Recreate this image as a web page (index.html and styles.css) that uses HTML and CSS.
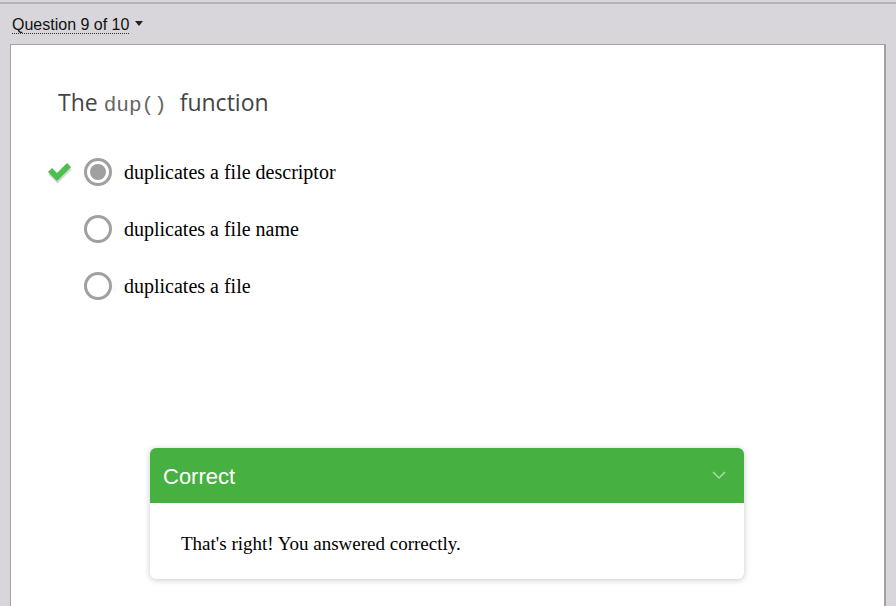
FILE: index.html
```html
<!DOCTYPE html>
<html>
<head>
<meta charset="utf-8">
<link rel="stylesheet" href="styles.css">
</head>
<body>
<div class="quiz">
  <div class="quiz-head">
    <span class="qnum">Question 9 of 10</span><span class="caret"></span>
  </div>
  <div class="panel">
    <h2 class="qtitle">The <code class="code">dup()</code> function</h2>
    <ul class="options">
      <li class="option">
        <span class="mark">
          <svg width="26" height="24" viewBox="0 0 26 24">
            <path d="M1.5 13.5 L5.5 9.5 L10.5 14.5 L20.5 4.5 L24.5 8.5 L10.5 22.5 Z" fill="#d4d4d4"/>
            <path d="M1 11 L5 7 L10 12 L20 2 L24 6 L10 20 Z" fill="#4cc04c"/>
          </svg>
        </span>
        <span class="radio checked"></span>
        <span class="label">duplicates a file descriptor</span>
      </li>
      <li class="option">
        <span class="mark"></span>
        <span class="radio"></span>
        <span class="label">duplicates a file name</span>
      </li>
      <li class="option">
        <span class="mark"></span>
        <span class="radio"></span>
        <span class="label">duplicates a file</span>
      </li>
    </ul>
    <div class="feedback">
      <div class="fb-head">
        <span class="fb-title">Correct</span>
        <svg class="chev" width="14" height="9" viewBox="0 0 14 9"><path d="M1 1 L7 7 L13 1" fill="none" stroke="rgba(255,255,255,0.55)" stroke-width="1.5"/></svg>
      </div>
      <div class="fb-body">That's right! You answered correctly.</div>
    </div>
  </div>
</div>
</body>
</html>
```
FILE: styles.css
```css
html, body {
  margin: 0;
  padding: 0;
  background: #d8d6db;
  overflow: hidden;
}
.quiz {
  margin-top: 2px;
  border-top: 2px solid #b4b3b6;
  background: #d8d6db;
  padding: 0 10px;
  height: 604px;
  box-sizing: border-box;
  font-family: "Liberation Serif", serif;
}
.quiz-head {
  height: 40px;
  padding-left: 2px;
  display: flex;
  align-items: center;
  font-family: "Liberation Sans", Arial, sans-serif;
  font-size: 16px;
  color: #111;
}
.qnum {
  border-bottom: 1px dotted #333;
  line-height: 17px;
  margin-top: 1px;
}
.caret {
  display: inline-block;
  width: 0;
  height: 0;
  border-left: 4px solid transparent;
  border-right: 4px solid transparent;
  border-top: 5px solid #222;
  margin-left: 6px;
  margin-top: -2px;
}
.panel {
  background: #fff;
  border: 1px solid #a2a2a2;
  border-right: 2px solid #a2a2a2;
  height: 620px;
  box-sizing: border-box;
  padding: 42px 0 0 47px;
}
.qtitle {
  margin: 0;
  font-family: "Open Sans", sans-serif;
  font-weight: 400;
  font-size: 23px;
  color: #444;
  line-height: 30px;
}
.code {
  font-family: "Liberation Mono", monospace;
  font-size: 21px;
  color: #666;
  padding-right: 7px;
}
.options {
  list-style: none;
  margin: 37px 0 0 -11px;
  padding: 0;
  display: flex;
  flex-direction: column;
  gap: 29px;
}
.option {
  display: flex;
  align-items: center;
  height: 28px;
}
.mark {
  width: 26px;
  height: 24px;
  margin-right: 11px;
  margin-top: 2px;
}
.radio {
  width: 22px;
  height: 22px;
  border: 3px solid #a0a0a0;
  border-radius: 50%;
  box-sizing: content-box;
  position: relative;
  flex: none;
}
.radio.checked::after {
  content: "";
  position: absolute;
  left: 3px;
  top: 3px;
  width: 16px;
  height: 16px;
  border-radius: 50%;
  background: #a0a0a0;
}
.label {
  margin-left: 12px;
  font-size: 20px;
  color: #000;
}
.feedback {
  width: 594px;
  margin: 148px 0 0 92px;
  border-radius: 6px;
  background: #fff;
  box-shadow: 0 1px 6px rgba(0,0,0,0.22);
  overflow: hidden;
}
.fb-head {
  height: 55px;
  background: #46b040;
  display: flex;
  align-items: center;
  justify-content: space-between;
  padding: 0 18px 0 13px;
}
.fb-title {
  font-family: "Liberation Sans", Arial, sans-serif;
  font-size: 22px;
  color: #fff;
  margin-top: 2px;
}
.chev {
  margin-top: 0;
}
.fb-body {
  padding: 31px 31px 25px 31px;
  font-size: 19px;
  color: #000;
  line-height: 20px;
}
```
